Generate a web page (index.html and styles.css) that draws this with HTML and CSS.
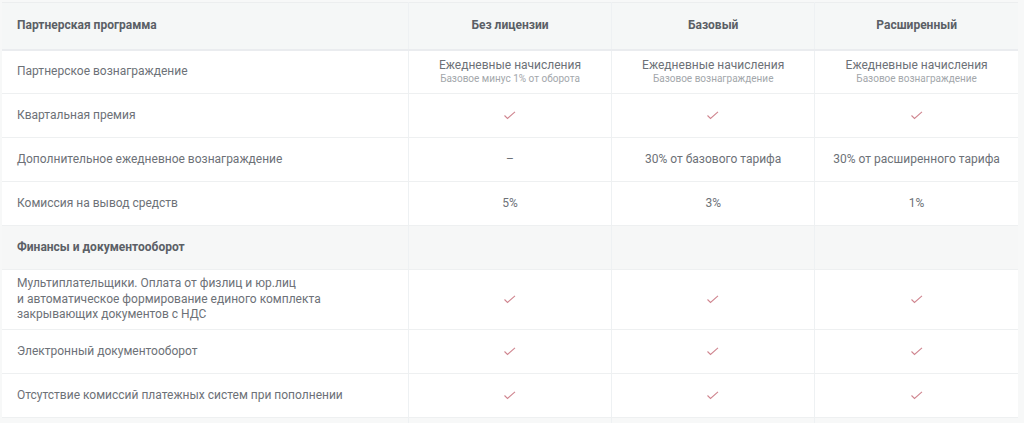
FILE: index.html
```html
<!DOCTYPE html>
<html lang="ru">
<head>
<meta charset="utf-8">
<title>Партнерская программа</title>
<link rel="stylesheet" href="styles.css">
</head>
<body>
<table class="plans">
  <colgroup>
    <col class="c-label">
    <col class="c-plan">
    <col class="c-plan">
    <col class="c-plan">
  </colgroup>
  <thead>
    <tr class="head">
      <th class="label">Партнерская программа</th>
      <th>Без лицензии</th>
      <th>Базовый</th>
      <th>Расширенный</th>
    </tr>
  </thead>
  <tbody>
    <tr>
      <td class="label">Партнерское вознаграждение</td>
      <td><span class="main">Ежедневные начисления</span><span class="sub">Базовое минус 1% от оборота</span></td>
      <td><span class="main">Ежедневные начисления</span><span class="sub">Базовое вознаграждение</span></td>
      <td><span class="main">Ежедневные начисления</span><span class="sub">Базовое вознаграждение</span></td>
    </tr>
    <tr>
      <td class="label">Квартальная премия</td>
      <td><svg class="check" width="12" height="9" viewBox="0 0 12 9"><polyline points="0.5,4.5 3.5,7.5 11,0.8"/></svg></td>
      <td><svg class="check" width="12" height="9" viewBox="0 0 12 9"><polyline points="0.5,4.5 3.5,7.5 11,0.8"/></svg></td>
      <td><svg class="check" width="12" height="9" viewBox="0 0 12 9"><polyline points="0.5,4.5 3.5,7.5 11,0.8"/></svg></td>
    </tr>
    <tr>
      <td class="label">Дополнительное ежедневное вознаграждение</td>
      <td>–</td>
      <td>30% от базового тарифа</td>
      <td>30% от расширенного тарифа</td>
    </tr>
    <tr>
      <td class="label">Комиссия на вывод средств</td>
      <td>5%</td>
      <td>3%</td>
      <td>1%</td>
    </tr>
    <tr class="section">
      <td class="label">Финансы и документооборот</td>
      <td></td>
      <td></td>
      <td></td>
    </tr>
    <tr class="multi">
      <td class="label">Мультиплательщики. Оплата от физлиц и юр.лиц<br>и автоматическое формирование единого комплекта<br>закрывающих документов с НДС</td>
      <td><svg class="check" width="12" height="9" viewBox="0 0 12 9"><polyline points="0.5,4.5 3.5,7.5 11,0.8"/></svg></td>
      <td><svg class="check" width="12" height="9" viewBox="0 0 12 9"><polyline points="0.5,4.5 3.5,7.5 11,0.8"/></svg></td>
      <td><svg class="check" width="12" height="9" viewBox="0 0 12 9"><polyline points="0.5,4.5 3.5,7.5 11,0.8"/></svg></td>
    </tr>
    <tr>
      <td class="label">Электронный документооборот</td>
      <td><svg class="check" width="12" height="9" viewBox="0 0 12 9"><polyline points="0.5,4.5 3.5,7.5 11,0.8"/></svg></td>
      <td><svg class="check" width="12" height="9" viewBox="0 0 12 9"><polyline points="0.5,4.5 3.5,7.5 11,0.8"/></svg></td>
      <td><svg class="check" width="12" height="9" viewBox="0 0 12 9"><polyline points="0.5,4.5 3.5,7.5 11,0.8"/></svg></td>
    </tr>
    <tr>
      <td class="label">Отсутствие комиссий платежных систем при пополнении</td>
      <td><svg class="check" width="12" height="9" viewBox="0 0 12 9"><polyline points="0.5,4.5 3.5,7.5 11,0.8"/></svg></td>
      <td><svg class="check" width="12" height="9" viewBox="0 0 12 9"><polyline points="0.5,4.5 3.5,7.5 11,0.8"/></svg></td>
      <td><svg class="check" width="12" height="9" viewBox="0 0 12 9"><polyline points="0.5,4.5 3.5,7.5 11,0.8"/></svg></td>
    </tr>
    <tr class="tail">
      <td class="label"></td>
      <td></td>
      <td></td>
      <td></td>
    </tr>
  </tbody>
</table>
</body>
</html>
```

FILE: styles.css
```css
html, body {
  margin: 0;
  padding: 0;
  background: #f7f8f8;
}
body {
  padding: 2px 0 0 2px;
  font-family: Roboto, "Liberation Sans", Arial, sans-serif;
  color: #6d7177;
}
.plans {
  width: 1016px;
  border-collapse: collapse;
  table-layout: fixed;
  background: #ffffff;
  border-top: 1px solid #eceeef;
}
.c-label { width: 406px; }
.c-plan { width: 203px; }
.plans th,
.plans td {
  height: 44px;
  padding: 0 8px;
  text-align: center;
  vertical-align: middle;
  font-size: 12px;
  font-weight: 400;
  line-height: 15.5px;
  border-bottom: 1px solid #eef0f1;
  border-left: 1px solid #eef1f3;
  box-sizing: border-box;
}
.plans .label {
  text-align: left;
  border-left: none;
  padding: 0 15px;
}
.head th {
  height: 47px;
  background: #f5f7f7;
  font-weight: 700;
  color: #5b5f66;
  font-size: 12px;
  border-bottom: 2px solid #eaecef;
}
.section td {
  background: #f6f7f7;
}
.section .label {
  font-weight: 700;
  color: #5b5f66;
}
.multi td {
  height: 60px;
}
.multi .label {
  padding-top: 5px;
  padding-bottom: 5px;
}
.tail td {
  height: 6px;
  border-bottom: none;
  background: #f7f8f8;
}
.main {
  display: block;
  font-size: 12px;
  line-height: 14px;
  color: #6d7177;
}
.sub {
  display: block;
  font-size: 10px;
  line-height: 13px;
  color: #a3a7ab;
}
.check {
  display: inline-block;
  vertical-align: middle;
}
.check polyline {
  fill: none;
  stroke: #d08690;
  stroke-width: 1.1;
}
```
